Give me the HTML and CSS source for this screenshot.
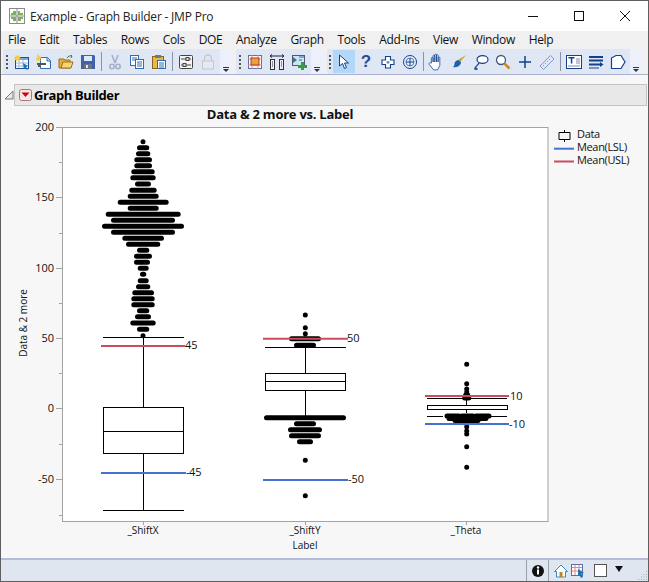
FILE: index.html
```html
<!DOCTYPE html>
<html lang="en">
<head>
<meta charset="utf-8">
<title>Example - Graph Builder - JMP Pro</title>
<link rel="stylesheet" href="styles.css">
</head>
<body>
<div class="window">
  <header class="titlebar">
    <svg class="app-icon" viewBox="0 0 16 16"><rect x=".5" y=".5" width="15" height="15" fill="#fff" stroke="#8a8a8a"/><path d="M8 1v14M1 8h14" stroke="#8a8a8a"/><path d="M2 5h2V3h3v4H2zM9 3h2v2h3v2H9zM2 9h5v4H4v-2H2zM9 9h5v2h-2v2H9z" fill="#7fae5f"/></svg>
    <span class="title-text">Example - Graph Builder - JMP Pro</span>
    <div class="win-controls">
      <svg class="win-btn" viewBox="0 0 46 30"><path d="M18 15.500h10" stroke="#111"/></svg>
      <svg class="win-btn" viewBox="0 0 46 30"><rect x="18.500" y="10.500" width="9" height="9" fill="none" stroke="#111"/></svg>
      <svg class="win-btn" viewBox="0 0 46 30"><path d="M18 10l10 10M28 10L18 20" stroke="#111" fill="none"/></svg>
    </div>
  </header>
  <nav class="menubar">
    <span class="m">File</span><span class="m">Edit</span><span class="m">Tables</span><span class="m">Rows</span><span class="m">Cols</span><span class="m">DOE</span><span class="m">Analyze</span><span class="m">Graph</span><span class="m">Tools</span><span class="m">Add-Ins</span><span class="m">View</span><span class="m">Window</span><span class="m">Help</span>
  </nav>
  <div class="toolbars">
    <div class="tb tb1">
      <span class="grip"></span>
      <span class="tool"><svg viewBox="0 0 16 16"><rect x="1.500" y="3.500" width="13" height="11" fill="#fff" stroke="#1f4e9c"/><path d="M2 4h12v2H2z" fill="#7fa6dc"/><path d="M5 6v8M9 6v8M2 9h12M2 12h12" stroke="#9db8df"/><path d="M3 0l1 2 2-1-1 2 2 1-2 1 1 2-2-1-1 2-1-2-2 1 1-2-1-1 2-1-1-2 2 1z" fill="#f4d03f"/><path d="M9 9l5 3-2 1 2 2-1 1-2-2-1 1z" fill="#1b75bb"/></svg></span>
      <span class="tool"><svg viewBox="0 0 16 16"><path d="M4.500 3.500h7l3 3v8h-10z" fill="#fff" stroke="#2d6cb5"/><path d="M11 4v3h3" fill="#bcd4ee" stroke="#2d6cb5"/><path d="M2 0l1 2 2-1-1 2 2 1-2 1 1 2-2-1-1 2-1-2-1 1 .5-2L0 4l1.500-1L1 1z" fill="#f4d03f"/><path d="M1 9h9v2H4v2H2v-2H1z" fill="#555"/></svg></span>
      <span class="tool"><svg viewBox="0 0 16 16"><path d="M1 5h5l1 1h5v8H1z" fill="#e0b040" stroke="#9b6f1a"/><path d="M3 14l2-6h10l-2 6z" fill="#f7d774" stroke="#9b6f1a"/><path d="M9 4c1-2 3-2.500 5-2l-1-1M14 2l-1 2" stroke="#3d7a3d" fill="none"/></svg></span>
      <span class="tool"><svg viewBox="0 0 16 16"><path d="M1 1h13l1 1v13H1z" fill="#3f62a8"/><rect x="4" y="2" width="8" height="5" fill="#dfe8f6"/><rect x="4" y="10" width="8" height="5" fill="#6c7482"/><rect x="6" y="11" width="2" height="3" fill="#dfe8f6"/></svg></span>
      <span class="sep"></span>
      <span class="tool dim"><svg viewBox="0 0 16 16"><path d="M5 1l3 8M11 1L8 9" stroke="#9fb0c8" stroke-width="1.500" fill="none"/><circle cx="5" cy="12.500" r="2.200" fill="none" stroke="#9fb0c8" stroke-width="1.500"/><circle cx="11" cy="12.500" r="2.200" fill="none" stroke="#9fb0c8" stroke-width="1.500"/></svg></span>
      <span class="tool"><svg viewBox="0 0 16 16"><rect x="1.500" y="1.500" width="8" height="10" fill="#fff" stroke="#2d6cb5"/><rect x="6.500" y="5.500" width="8" height="9" fill="#fff" stroke="#2d6cb5"/><path d="M3 4h5M3 6h3M8 8h5M8 10h5M8 12h5" stroke="#2d6cb5"/></svg></span>
      <span class="tool"><svg viewBox="0 0 16 16"><rect x="1.500" y="2.500" width="11" height="12" fill="#e7b84a" stroke="#8b6414"/><rect x="4" y="1" width="6" height="3" fill="#777"/><rect x="6.500" y="6.500" width="8" height="8" fill="#fff" stroke="#2d6cb5"/><path d="M8 9h5M8 11h5M8 13h5" stroke="#2d6cb5"/></svg></span>
      <span class="sep"></span>
      <span class="tool"><svg viewBox="0 0 16 16"><rect x="1.500" y="1.500" width="13" height="13" fill="#f4f4f4" stroke="#444" rx="1"/><path d="M3 5h10M3 11h10" stroke="#444"/><rect x="8" y="3.500" width="3" height="3" fill="#ddd" stroke="#444"/><rect x="5" y="9.500" width="3" height="3" fill="#ddd" stroke="#444"/></svg></span>
      <span class="tool"><svg viewBox="0 0 16 16"><path d="M4.500 7V4.500a3.500 3.500 0 0 1 7 0V7" fill="none" stroke="#c4c8cf" stroke-width="1.300"/><rect x="2.500" y="7" width="11" height="8" fill="#e6e9ef" stroke="#c4c8cf"/></svg></span>
      <span class="more"></span>
    </div>
    <div class="tb tb2">
      <span class="grip"></span>
      <span class="tool"><svg viewBox="0 0 16 16"><rect x="1.500" y="1.500" width="13" height="13" fill="#fff" stroke="#5b6fa8"/><path d="M5 1v14M11 1v14M1 5h14M1 11h14" stroke="#d88"/><rect x="4" y="4" width="8" height="7" fill="#e9a13b" stroke="#b33"/></svg></span>
      <span class="tool"><svg viewBox="0 0 16 16"><path d="M1 2h14M1 2l2-1.500M1 2l2 1.500M15 2l-2-1.500M15 2l-2 1.500" stroke="#222" fill="none"/><rect x="1.500" y="5.500" width="4" height="10" fill="#eef" stroke="#333"/><rect x="10.500" y="5.500" width="4" height="10" fill="#eef" stroke="#333"/><path d="M3 8h1M3 10h1M3 12h1M12 8h1M12 10h1M12 12h1" stroke="#333"/></svg></span>
      <span class="tool"><svg viewBox="0 0 16 16"><rect x="1.500" y="1.500" width="12" height="10" fill="#cfe3f5" stroke="#557"/><path d="M2 3l4 3-4 3z" fill="#1f8a70"/><path d="M8 3h5M8 6h3" stroke="#1b75bb"/><path d="M10 8h3v3h3v3h-3v2h-3v-2H7v-3h3z" fill="#2f9e44"/></svg></span>
      <span class="more"></span>
    </div>
    <div class="tb tb3">
      <span class="grip"></span>
      <span class="tool on"><svg viewBox="0 0 16 16"><path d="M3.500 1v11l3-2.500 2 5 2-1-2-4.500h4z" fill="#fff" stroke="#14418c"/></svg></span>
      <span class="tool"><span class="q">?</span></span>
      <span class="tool"><svg viewBox="0 0 16 16"><path d="M5.500 2.500h5v3.500h3.500v4.500h-3.500v3.500h-5v-3.500H2V6h3.500z" fill="#fff" stroke="#14418c" stroke-width="1.100"/><circle cx="8" cy="8.200" r="1.500" fill="#6d8fc7"/></svg></span>
      <span class="tool"><svg viewBox="0 0 16 16"><circle cx="8" cy="8" r="6.500" fill="#e8eef8" stroke="#14418c"/><circle cx="8" cy="8" r="4" fill="none" stroke="#5d7fbd"/><path d="M8 4v8M4 8h8" stroke="#14418c"/></svg></span>
      <span class="sep"></span>
      <span class="tool"><svg class="wide" viewBox="0 0 16 16"><path d="M3 9V4.500a.8.800 0 0 1 1.500 0V8 2.500a.8.800 0 0 1 1.500 0V8 1.500a.8.800 0 0 1 1.500 0V8 2a.8.800 0 0 1 1.500 0v6V4a.8.800 0 0 1 1.500 0v7l-2 4H5L1 10c-.5-1 .8-1.800 2-1z" fill="#fff" stroke="#14418c" stroke-width=".7"/></svg></span>
      <span class="tool"><svg viewBox="0 0 16 16"><path d="M15 1L9 8l-2-2z" fill="#c9a227"/><path d="M7 6l3 2c0 3-3 6-8 5 2-1 1-3 2-5 1-1 2-2 3-2z" fill="#1f5fb0"/></svg></span>
      <span class="tool"><svg viewBox="0 0 16 16"><ellipse cx="9.500" cy="5.500" rx="5.500" ry="3.800" fill="#fff" stroke="#14418c" stroke-width="1.200"/><path d="M6 9c-1 2-3 3-4.500 5.500M3 14a1 1 0 1 0 .01 0" fill="none" stroke="#14418c" stroke-width="1.200"/></svg></span>
      <span class="tool"><svg viewBox="0 0 16 16"><circle cx="6" cy="6" r="4.500" fill="#fff" stroke="#44597c" stroke-width="1.300"/><path d="M9.500 9.500l5 5" stroke="#c78a24" stroke-width="2.500"/></svg></span>
      <span class="tool"><svg viewBox="0 0 16 16"><path d="M8 2v12M2 8h12" stroke="#14418c" stroke-width="1.500"/></svg></span>
      <span class="tool"><svg viewBox="0 0 16 16"><path d="M1 12L11.500 1.500 15 5 4.500 15.500z" fill="#dfe8f6" stroke="#7f9cc8"/><path d="M4 11l1 1M6 9l1 1M8 7l1 1M10 5l1 1" stroke="#7f9cc8"/></svg></span>
      <span class="sep"></span>
      <span class="tool"><svg viewBox="0 0 16 16"><rect x=".500" y="1.500" width="15" height="13" fill="#fff" stroke="#14418c"/><path d="M10 5h4M10 7h4M10 9h4M2 12h12" stroke="#88a"/><rect x="2.500" y="3" width="6" height="1.500" fill="#14418c"/><rect x="4.800" y="3" width="1.500" height="6.500" fill="#14418c"/></svg></span>
      <span class="tool"><svg viewBox="0 0 16 16"><path d="M1 3h14M1 6.500h14M1 10.500h13" stroke="#14418c" stroke-width="1.800"/><path d="M12 8l3.500 2.500L12 13z" fill="#14418c"/><path d="M1 14h10" stroke="#14418c"/></svg></span>
      <span class="tool"><svg viewBox="0 0 16 16"><path d="M1.500 4L6 1.500h5L15 8l-4 6.500H1.500z" fill="#fff" stroke="#14418c" stroke-width="1.200"/></svg></span>
      <span class="more last"></span>
    </div>
  </div>
  <main class="content">
    <div class="outline">
      <svg class="disclose" viewBox="0 0 10 10"><path d="M9 1v8H1z" fill="#e8e8e8" stroke="#777"/></svg>
      <div class="outline-head">
        <svg class="red-btn" viewBox="0 0 13 12"><rect x=".5" y=".5" width="12" height="11" rx="2" fill="#f3e8e8" stroke="#a77"/><path d="M2.500 3.500h8L6.500 8z" fill="#d00"/></svg>
        <span class="outline-title">Graph Builder</span>
      </div>
    </div>
    <svg class="chart" viewBox="1 106 647 452" role="img">
      <text class="t-title" x="280" y="119">Data &amp; 2 more vs. Label</text>

      <rect class="frame" x="62.500" y="127.500" width="485.500" height="394"/>
      <path class="axis" d="M56 127.500h6M56 197.500h6M56 268.500h6M56 338.500h6M56 408.500h6M56 479.500h6M59 162.500h3M59 233.500h3M59 303.500h3M59 373.500h3M59 444.500h3M59 515.500h3M143.500 522v3M305.500 522v3M466.500 522v3"/>
      <g class="ylab">
        <text x="54" y="131">200</text><text x="54" y="201">150</text><text x="54" y="272">100</text><text x="54" y="342">50</text><text x="54" y="412">0</text><text x="54" y="483">-50</text>
      </g>
      <text class="tick-lab" transform="translate(27 323) rotate(-90)">Data &amp; 2 more</text>
      <g class="xlab">
        <text x="143" y="534">_ShiftX</text><text x="305" y="534">_ShiftY</text><text x="466" y="534">_Theta</text><text x="305" y="549">Label</text>
      </g>

      <path class="rows" d="M143 141.700h.01M139.500 147.700H146.800M138.500 153.700H147.800M136.800 159.700H149.500M136.800 165.700H149.500M133.800 171.700H152.200M132.800 177.700H153.200M137.500 184H148.500M131.800 190.300H154.200M130.200 196.300H156.200M120.200 202.300H166.200M130.200 208.300H156.200M108.200 214.300H178.200M113.500 220.300H172.500M104.500 226.300H181.500M113.500 232.300H172.500M124.800 238.300H161.500M128.500 244.300H157.800M139.500 250.300H146.800M136.500 256.300H149.500M136.500 262.300H147.500M140.200 268.300H146.200M142.500 274.300H143.800M140.200 280.700H146.200M138.500 286.700H147.800M134.800 292.700H151.500M133.800 298.700H152.200M133.800 304.700H152.200M139.500 310.700H146.800M137.500 316.700H148.500M132.800 323H153.200M139.500 329.300H146.800M143 335.700h.01"/>
      <path class="box" d="M103 337.500H184M143.500 337.500V407.500M143.500 453.500V510.500M103 510.500H184"/>
      <rect class="box" x="103.500" y="407.500" width="80" height="46"/>
      <path class="box" d="M103.500 431.500H183.500"/>
      <path class="mean-u" d="M101 346H185"/>
      <path class="mean-l" d="M101 473H186"/>
      <g class="vlab"><text x="185" y="349">45</text><text x="186" y="476">-</text><text x="189" y="476">45</text></g>

      <path class="rows" d="M305.300 315h.01M305.300 327.700h.01M305.300 333.700h.01M291.500 338.700H318.500M296.500 345.300H313.500M266.500 417.700H343.500M296.500 423.700H313.500M290.500 429.700H319.500M291.500 435.700H318.500M299.500 441.700H310.500M305.300 460.300h.01M305.300 495.700h.01"/>
      <path class="box" d="M265 347.500H346M305.500 347.500V373.500M305.500 390.500V417"/>
      <rect class="box" x="265.500" y="373.500" width="80" height="17"/>
      <path class="box" d="M265.500 381.500H345.500"/>
      <path class="mean-u" d="M263 338.700H348"/>
      <path class="mean-l" d="M263 480H348"/>
      <g class="vlab"><text x="347" y="342">50</text><text x="348" y="483">-50</text></g>

      <path class="rows" d="M466.700 364.300h.01M466.700 383.700h.01M466.700 389h.01M466.700 392h.01M465.700 395H467.700M464.700 398H468.700M466.700 426.700h.01M466.700 431h.01M466.700 434h.01M466.700 446.700h.01M466.700 467.300h.01"/>
      <path class="rows" d="M447 416H459M462 416H473M476 416H489M449 418.500H486M455 420.500H462M466 420.500H478M458 421.500H475"/>
      <path class="box" d="M427 398.500H507M466.500 398.500V405M466.500 410V413M427 416.500H443M491 416.500H507"/>
      <rect class="box" x="427.500" y="405.500" width="80" height="4"/>
      <path class="mean-u" d="M425 396H509"/>
      <path class="mean-l" d="M425 424H509"/>
      <g class="vlab"><text x="510" y="400">10</text><text x="509" y="428">-10</text></g>

      <path class="box" d="M559 132.500h11v7h-11zM564.500 130v2M564.500 140v2"/>
      <path class="mean-l" d="M554 148.700H574"/>
      <path class="mean-u" d="M554 161.500H574"/>
      <g class="leg"><text x="577" y="138">Data</text><text x="577" y="151">Mean(LSL)</text><text x="577" y="164">Mean(USL)</text></g>
    </svg>
  </main>
  <footer class="status">
    <span class="st-cell st-info"><svg viewBox="0 0 14 14"><circle cx="7" cy="7" r="6" fill="#111"/><path d="M7 5.500v5" stroke="#fff" stroke-width="2"/><circle cx="7" cy="3.500" r="1.200" fill="#fff"/></svg></span>
    <span class="st-icons">
      <svg viewBox="0 0 14 14"><path d="M7 1L.5 7.500H2.500V13h9V7.500h2z" fill="#fff" stroke="#2b8fc4"/><rect x="5.500" y="8" width="3" height="5" fill="#b8862c"/></svg>
      <svg viewBox="0 0 14 14"><rect x=".5" y=".5" width="11" height="11" fill="#fff" stroke="#5b6fa8"/><path d="M1 3.500h10M4 1v10M8 1v10M1 7h10" stroke="#d88"/><path d="M7 5l6 4-2.500.5L12 13l-2 1-1.500-3L7 12z" fill="#1b75bb"/></svg>
    </span>
    <span class="swatch"></span>
    <span class="tri"></span>
    <svg class="resize" viewBox="0 0 12 12"><path d="M10 2h1v1h-1zM7.500 5h1v1h-1zM10 5h1v1h-1zM5 7.500h1v1H5zM7.500 7.500h1v1h-1zM10 7.500h1v1h-1zM2.500 10h1v1h-1zM5 10h1v1H5zM7.500 10h1v1h-1zM10 10h1v1h-1z" fill="#a8a8a8"/></svg>
  </footer>
</div>
</body>
</html>
```
FILE: styles.css
```css
* { box-sizing: border-box; }
html, body { margin: 0; padding: 0; }
body { font-family: "Open Sans", "Noto Sans", sans-serif; color: #111; background: #fff; }
svg { display: block; }

.window {
  width: 649px; height: 582px; display: flex; flex-direction: column; overflow: hidden;
  border: 1px solid #5f5f5f; background: #f7f7f7;
}

.titlebar { height: 30px; background: #fff; display: flex; align-items: center; padding-left: 8px; flex: none; }
.app-icon { width: 16px; height: 16px; }
.title-text { margin-left: 5px; font-size: 12px; letter-spacing: -.2px; color: #222; }
.win-controls { margin-left: auto; display: flex; }
.win-btn { width: 46px; height: 30px; }

.menubar { height: 17px; background: #f0f0f0; display: flex; gap: 13.75px; padding-left: 7px; align-items: center; flex: none; }
.m { font-size: 12px; letter-spacing: -.35px; color: #111; }

.toolbars { height: 27px; background: #f0f0f0; display: flex; padding-left: 2px; flex: none; border-bottom: 1px solid #a9b1d2; }
.tb { display: flex; align-items: center; height: 25px; margin-top: 1px; background: #dfe7f5; border-radius: 2px; }
.tb1 { width: 229px; }
.tb2 { width: 86px; margin-left: 4px; }
.tb3 { width: 315px; margin-left: 5px; }
.grip {
  width: 8px; height: 16px; flex: none;
  background: radial-gradient(circle at 50% 50%, #555 0 1px, transparent 1.2px) 0 0 / 8px 4px repeat-y;
}
.tb3 .grip { width: 6px; background-size: 6px 4px; }
.tool { width: 22px; height: 23px; flex: none; display: flex; align-items: center; justify-content: center; }
.tool svg { width: 16px; height: 16px; }
.tool svg.wide { width: 18px; height: 18px; }
.tool.on { background: #b3d7f8; }
.sep { width: 1px; height: 19px; margin: 0 2px 0 2px; background: #8b93a8; flex: none; }
.more { width: 12px; height: 25px; margin-left: 1px; flex: none; background: #ebf0fa; position: relative; }
.more::before { content: ""; position: absolute; left: 3px; top: 18px; width: 6px; height: 1px; background: #333; }
.more::after {
  content: ""; position: absolute; left: 3px; top: 20px; width: 0; height: 0;
  border-left: 3px solid transparent; border-right: 3px solid transparent; border-top: 3px solid #333;
}
.q { font: 700 17px/23px "Liberation Sans", sans-serif; color: #1f4e9c; }

.content { flex: 1; min-height: 0; display: flex; flex-direction: column; padding-top: 9px; background: #f7f7f7; }
.outline { display: flex; align-items: center; height: 22px; padding-left: 3px; flex: none; }
.disclose { width: 10px; height: 10px; }
.outline-head {
  flex: 1; height: 22px; margin-right: 1px; display: flex; align-items: center; padding-left: 4px;
  background: #e8e8e8; border: 1px solid #c4c4c4;
}
.red-btn { width: 13px; height: 12px; }
.outline-title { margin-left: 2px; font: 700 13px "Open Sans", sans-serif; letter-spacing: -.4px; color: #000; }

.chart { width: 647px; height: 452px; flex: none; }
.chart text { font-family: "Open Sans", "Noto Sans", sans-serif; font-size: 10.500px; fill: #111; }
.chart .t-title { font-size: 13px; font-weight: 700; text-anchor: middle; letter-spacing: -.25px; }
.chart .tick-lab { text-anchor: middle; font-size: 10px; }
.frame { fill: #fff; stroke: #a3a3a3; }
.axis { fill: none; stroke: #a3a3a3; }
.chart .ylab text { text-anchor: end; font-size: 11px; }
.chart .xlab text { text-anchor: middle; font-size: 10px; }
.chart .vlab text { font-size: 11px; }
.chart .leg text { font-size: 11px; letter-spacing: -.35px; }
.rows { fill: none; stroke: #000; stroke-width: 5; stroke-linecap: round; }
.box { fill: none; stroke: #000; stroke-width: 1; }
rect.box { fill: #fff; }
.mean-u { fill: none; stroke: #cc4b5c; stroke-width: 2; }
.mean-l { fill: none; stroke: #4472d0; stroke-width: 2; }

.status { height: 23px; flex: none; display: flex; align-items: center; background: #e0e6f0; border-top: 2px solid #b4bcdc; padding-left: 525px; }
.st-cell { width: 23px; height: 21px; display: flex; align-items: center; justify-content: center; border-left: 1px solid #9aa0ac; border-right: 1px solid #9aa0ac; flex: none; }
.st-info svg { width: 14px; height: 14px; }
.st-icons { display: flex; gap: 3px; margin-left: 5px; flex: none; }
.st-icons svg { width: 14px; height: 14px; }
.swatch { width: 13px; height: 13px; margin-left: 9px; background: #fff; border: 1px solid #555; flex: none; }
.tri { width: 0; height: 0; margin-left: 8px; margin-bottom: 3px; border: 4px solid transparent; border-top: 6px solid #111; border-bottom: 0; flex: none; }
.resize { width: 12px; height: 12px; margin-left: 13px; margin-top: 8px; flex: none; }
```
